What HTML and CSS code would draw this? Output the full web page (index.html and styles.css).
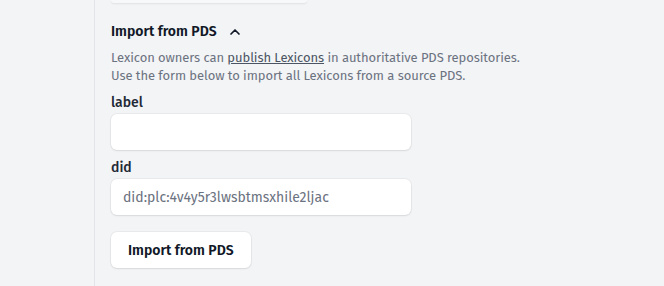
FILE: index.html
```html
<!DOCTYPE html>
<html lang="en">
<head>
  <meta charset="UTF-8">
  <title>Import from PDS</title>
  <link rel="stylesheet" href="styles.css">
</head>
<body>
  <div class="layout">
    <aside class="sidebar"></aside>

    <main class="main">
      <div class="prev-card"></div>

      <section class="import">
        <h3 class="import-title">
          Import from PDS
          <svg class="chevron" width="16" height="16" viewBox="0 0 16 16" fill="none">
            <path d="M4 10 L8 6 L12 10" stroke="#111827" stroke-width="1.7" stroke-linecap="round" stroke-linejoin="round"/>
          </svg>
        </h3>
        <p class="import-desc">
          Lexicon owners can <a href="#">publish Lexicons</a> in authoritative PDS repositories.<br>
          Use the form below to import all Lexicons from a source PDS.
        </p>

        <form class="import-form">
          <label class="field">
            <span class="field-label">label</span>
            <input type="text" class="field-input">
          </label>
          <label class="field">
            <span class="field-label">did</span>
            <input type="text" class="field-input" value="did:plc:4v4y5r3lwsbtmsxhile2ljac">
          </label>
          <div class="actions">
            <button type="button" class="btn">Import from PDS</button>
          </div>
        </form>
      </section>
    </main>
  </div>
</body>
</html>
```

FILE: styles.css
```css
body {
  margin: 0;
  font-family: "Fira Sans", "Noto Sans", sans-serif;
  background-color: #f3f4f6;
  color: #111827;
}

.layout {
  display: flex;
  min-height: 286px;
}

.sidebar {
  width: 94px;
  border-right: 1px solid #e2e4e8;
  flex-shrink: 0;
}

.main {
  flex: 1;
  padding: 0 16px;
}

.prev-card {
  width: 196px;
  height: 3px;
  background-color: #f7f8f9;
  border-radius: 0 0 6px 6px;
  box-shadow: 0 1px 2px rgba(0, 0, 0, 0.08);
}

.import {
  padding-top: 19px;
}

.import-title {
  margin: 0;
  font-size: 14px;
  font-weight: 600;
  line-height: 20px;
  display: flex;
  align-items: center;
  gap: 10px;
}

.import-desc {
  margin: 7px 0 0;
  font-size: 13px;
  line-height: 18px;
  letter-spacing: -0.08px;
  color: #6b7280;
}

.import-desc a {
  color: #4b5563;
  text-decoration: underline;
}

.import-form {
  margin-top: 8px;
  width: 300px;
}

.field {
  display: block;
  margin-bottom: 8px;
}

.field-label {
  display: block;
  font-size: 14px;
  font-weight: 500;
  line-height: 20px;
  color: #1f2937;
  margin-bottom: 1px;
}

.field-input {
  box-sizing: border-box;
  width: 100%;
  height: 36px;
  padding: 0 12px;
  border: none;
  border-radius: 6px;
  background-color: white;
  box-shadow: 0 0 0 1px rgba(0, 0, 0, 0.04), 0 1px 2px rgba(0, 0, 0, 0.08);
  font-family: inherit;
  font-size: 14px;
  color: #6b7280;
}

.actions {
  margin-top: 17px;
}

.btn {
  height: 36px;
  padding: 0 17px;
  border: none;
  border-radius: 6px;
  background-color: white;
  box-shadow: 0 0 0 1px rgba(0, 0, 0, 0.04), 0 1px 2px rgba(0, 0, 0, 0.08);
  font-family: inherit;
  font-size: 14px;
  font-weight: 600;
  color: #111827;
  cursor: pointer;
}
```
